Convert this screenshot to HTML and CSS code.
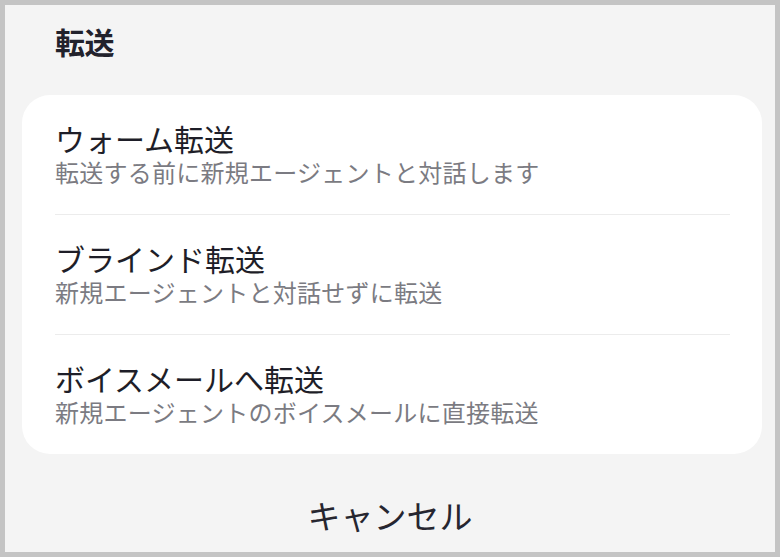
FILE: index.html
```html
<!DOCTYPE html>
<html lang="ja">
<head>
<meta charset="utf-8">
<link rel="stylesheet" href="styles.css">
</head>
<body>
<div class="frame">
  <h1 class="heading">転送</h1>
  <div class="card">
    <div class="item">
      <div class="title">ウォーム転送</div>
      <div class="sub">転送する前に新規エージェントと対話します</div>
    </div>
    <div class="item">
      <div class="title">ブラインド転送</div>
      <div class="sub">新規エージェントと対話せずに転送</div>
    </div>
    <div class="item">
      <div class="title">ボイスメールへ転送</div>
      <div class="sub">新規エージェントのボイスメールに直接転送</div>
    </div>
  </div>
  <div class="cancel">キャンセル</div>
</div>
</body>
</html>
```

FILE: styles.css
```css
html, body {
  margin: 0;
  padding: 0;
}
body {
  font-family: "Noto Sans CJK JP", "Noto Sans", sans-serif;
}
.frame {
  box-sizing: border-box;
  width: 780px;
  height: 557px;
  border: 5px solid #c4c4c4;
  background: #f4f4f4;
  display: flex;
  flex-direction: column;
}
.heading {
  margin: 21px 0 0 50px;
  font-size: 30px;
  line-height: 30px;
  font-weight: 700;
  letter-spacing: -0.5px;
  color: #22222c;
}
.card {
  margin: 39px 13px 0 17px;
  background: #ffffff;
  border-radius: 28px;
  padding: 0 32px 0 33px;
}
.item {
  box-sizing: border-box;
  height: 120px;
  padding-top: 28px;
  border-bottom: 1px solid #ececec;
}
.item:last-child {
  border-bottom: none;
  height: 119px;
}
.title {
  font-size: 30px;
  line-height: 30px;
  margin-bottom: 7px;
  color: #1e1e28;
}
.sub {
  font-size: 24px;
  line-height: 24px;
  letter-spacing: 0.25px;
  color: #7b7b82;
}
.cancel {
  margin-top: 45px;
  text-align: center;
  font-size: 33px;
  line-height: 33px;
  color: #262630;
}
```
